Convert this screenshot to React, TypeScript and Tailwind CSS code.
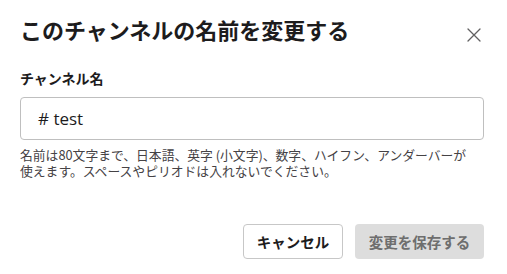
import React from "react";

export default function App() {
  const font = { fontFamily: '"Noto Sans CJK JP", "Noto Sans", sans-serif' };
  return (
    <div className="w-[507px] h-[274px] bg-white text-[#1d1c1d] flex flex-col" style={font}>
      <div className="flex items-start justify-between pl-[20px] pr-[26px] pt-[13px]">
        <h1 className="text-[22px] font-bold leading-[32px]">このチャンネルの名前を変更する</h1>
        <svg width="14" height="14" viewBox="0 0 14 14" className="mt-[15px] text-[#616061]">
          <path d="M1 1 L13 13 M13 1 L1 13" stroke="currentColor" strokeWidth="1.3" fill="none" strokeLinecap="round" />
        </svg>
      </div>
      <div className="px-[20px] pt-[23px]">
        <div className="text-[14px] font-bold leading-[20px]">チャンネル名</div>
        <div className="mt-[9px] h-[43px] w-[464px] border border-[#bfbfbf] rounded-[4px] flex items-center pl-[17px] text-[17px] leading-none">
          <span className="text-[#1d1c1d]" style={{ fontFamily: '"Open Sans", "Noto Sans", sans-serif' }}># test</span>
        </div>
        <div className="mt-[7px] text-[12.8px] leading-[16px] text-[#454245] whitespace-nowrap">
          名前は80文字まで、日本語、英字 (小文字)、数字、ハイフン、アンダーバーが<br />
          使えます。スペースやピリオドは入れないでください。
        </div>
      </div>
      <div className="flex justify-end gap-[12px] pr-[23px] mt-[45px]">
        <button className="h-[35px] w-[100px] border border-[#c7c7c7] rounded-[4px] text-[14.5px] font-bold bg-white text-[#1d1c1d]">
          キャンセル
        </button>
        <button className="h-[35px] w-[129px] rounded-[4px] text-[14.5px] font-bold bg-[#dddddd] text-[#6e6e6e]">
          変更を保存する
        </button>
      </div>
    </div>
  );
}
